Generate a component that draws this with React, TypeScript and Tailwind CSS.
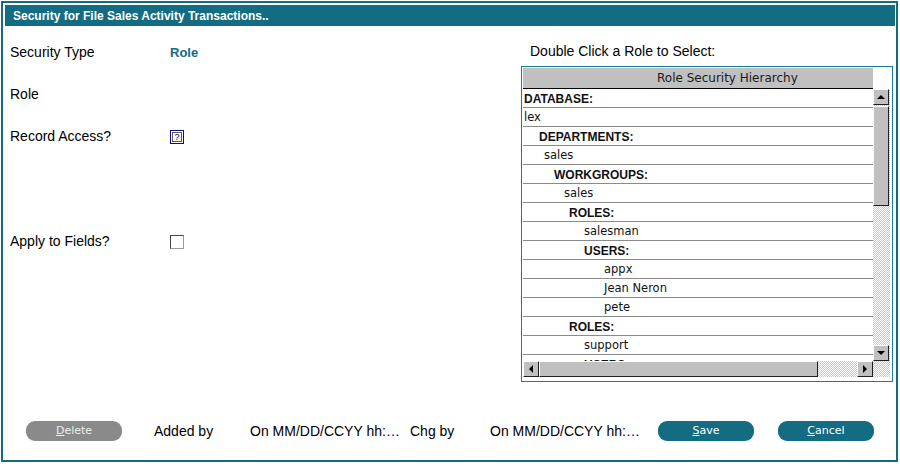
import React from "react";

type Row = { t: string; b?: boolean; pl: string };

const rows: Row[] = [
  { t: "DATABASE:", b: true, pl: "pl-[1px]" },
  { t: "lex", pl: "pl-[1px]" },
  { t: "DEPARTMENTS:", b: true, pl: "pl-[16px]" },
  { t: "sales", pl: "pl-[21px]" },
  { t: "WORKGROUPS:", b: true, pl: "pl-[31px]" },
  { t: "sales", pl: "pl-[41px]" },
  { t: "ROLES:", b: true, pl: "pl-[46px]" },
  { t: "salesman", pl: "pl-[61px]" },
  { t: "USERS:", b: true, pl: "pl-[61px]" },
  { t: "appx", pl: "pl-[81px]" },
  { t: "Jean Neron", pl: "pl-[81px]" },
  { t: "pete", pl: "pl-[81px]" },
  { t: "ROLES:", b: true, pl: "pl-[46px]" },
  { t: "support", pl: "pl-[61px]" },
  { t: "USERS:", b: true, pl: "pl-[61px]" },
];

const checker =
  "bg-[image:repeating-conic-gradient(#c9c9c9_0_25%,#ffffff_0_50%)] bg-[length:2px_2px]";

function Bevel({ className, children }: { className?: string; children?: React.ReactNode }) {
  return (
    <div
      className={
        "bg-[#c0c0c0] border-t border-l border-t-white border-l-white border-b border-r border-b-[#202020] border-r-[#202020] flex items-center justify-center " +
        (className || "")
      }
    >
      {children}
    </div>
  );
}

function Tri({ dir }: { dir: "up" | "down" | "left" | "right" }) {
  const pts =
    dir === "up"
      ? "0,4 4,0 8,4"
      : dir === "down"
      ? "0,0 8,0 4,4"
      : dir === "left"
      ? "4,0 4,8 0,4"
      : "0,0 0,8 4,4";
  const w = dir === "up" || dir === "down" ? 8 : 4;
  const h = dir === "up" || dir === "down" ? 4 : 8;
  return (
    <svg width={w} height={h} viewBox={`0 0 ${w} ${h}`}>
      <polygon points={pts} fill="#000" />
    </svg>
  );
}

export default function App() {
  const sans = "font-['Liberation_Sans',Arial,sans-serif]";
  const dv = "font-['DejaVu_Sans',Verdana,sans-serif]";
  return (
    <div className="w-[900px] h-[466px] bg-white overflow-hidden relative">
      <div className="ml-[1px] mt-[1px] w-[897px] h-[461px] border-2 border-[#136c82] pt-[2px] pl-[2px] pr-[1px] flex flex-col">
        {/* title bar */}
        <div className={`h-[21px] bg-[#136c82] flex items-center pl-[8px] text-white font-bold text-[12px] ${sans}`}>
          Security for File Sales Activity Transactions..
        </div>

        {/* content */}
        <div className="h-[395px] flex">
          {/* left column */}
          <div className={`w-[516px] pl-[5px] pt-[18px] text-[14px] text-black ${sans}`}>
            <div className="h-[42px] flex items-start">
              <div className="w-[160px] leading-[17px]">Security Type</div>
              <div className="leading-[17px] font-bold text-[13px] text-[#136c82]">Role</div>
            </div>
            <div className="h-[42px] flex items-start">
              <div className="w-[160px] leading-[17px]">Role</div>
            </div>
            <div className="h-[105px] flex items-start">
              <div className="w-[160px] leading-[17px]">Record Access?</div>
              <div className="mt-[2px] w-[14px] h-[14px] border border-[#101080] p-[1px]">
                <div className="w-full h-full border border-[#5a5a5a] flex items-center justify-center text-[9px] leading-none text-black bg-white">
                  ?
                </div>
              </div>
            </div>
            <div className="h-[42px] flex items-start">
              <div className="w-[160px] leading-[17px]">Apply to Fields?</div>
              <div className="mt-[2px] w-[14px] h-[14px] border-t border-l border-t-[#444444] border-l-[#444444] border-b border-r border-b-[#9a9a9a] border-r-[#9a9a9a] bg-white" />
            </div>
          </div>

          {/* right column */}
          <div className="flex flex-col pt-[17px]">
            <div className={`pl-[9px] text-[14px] leading-[17px] text-black ${sans}`}>
              Double Click a Role to Select:
            </div>
            <div className="mt-[6px] w-[372px] h-[316px] border border-[#1a7c95] pt-[1px] pl-[1px] pr-[2px] flex flex-col">
              <div className="flex h-[293px]">
                {/* table */}
                <div className="w-[350px] flex flex-col">
                  <div
                    className={`h-[21px] bg-[#c0c0c0] border-b border-black flex items-center pl-[134px] text-[12px] text-[#1a1a1a] whitespace-nowrap ${dv}`}
                  >
                    Role Security Hierarchy
                  </div>
                  <div className="h-[272px] overflow-hidden">
                    {rows.map((r, i) => (
                      <div
                        key={i}
                        className={`h-[19px] pt-[2px] border-b border-[#8a8a8a] flex items-center ${r.pl} ${
                          r.b ? `${sans} font-bold text-[12px] text-[#111]` : `${dv} text-[11.5px] text-[#111]`
                        }`}
                      >
                        {r.t}
                      </div>
                    ))}
                  </div>
                </div>
                {/* vertical scrollbar */}
                <div className="w-[17px] flex flex-col">
                  <div className="h-[21px] bg-white" />
                  <div className={`h-[272px] flex flex-col ${checker}`}>
                    <Bevel className="h-[16px] w-[16px] shrink-0">
                      <Tri dir="up" />
                    </Bevel>
                    <Bevel className="mt-[1px] h-[100px] w-[16px] shrink-0" />
                    <div className="flex-1" />
                    <Bevel className="h-[16px] w-[16px] shrink-0">
                      <Tri dir="down" />
                    </Bevel>
                  </div>
                </div>
              </div>
              {/* horizontal scrollbar */}
              <div className={`flex h-[16px] ${checker}`}>
                <Bevel className="w-[16px] h-[16px] shrink-0">
                  <Tri dir="left" />
                </Bevel>
                <Bevel className="w-[279px] h-[16px] shrink-0" />
                <div className="flex-1" />
                <Bevel className="w-[16px] h-[16px] shrink-0 mr-[17px]">
                  <Tri dir="right" />
                </Bevel>
              </div>
            </div>
          </div>
        </div>

        {/* footer */}
        <div className={`h-[20px] flex items-center pl-[21px] text-[14px] text-black ${sans}`}>
          <button className={`w-[96px] h-[20px] rounded-[9px] bg-[#8a8a8a] text-[#ececec] text-[11px] ${dv}`}>
            <span className="underline">D</span>elete
          </button>
          <div className="ml-[32px] w-[96px]">Added by</div>
          <div className="w-[160px]">On MM/DD/CCYY hh:…</div>
          <div className="w-[80px]">Chg by</div>
          <div className="w-[168px]">On MM/DD/CCYY hh:…</div>
          <button className={`w-[96px] h-[20px] rounded-[9px] bg-[#136c82] text-white text-[11px] ${dv}`}>
            <span className="underline">S</span>ave
          </button>
          <button className={`ml-[24px] w-[96px] h-[20px] rounded-[9px] bg-[#136c82] text-white text-[11px] ${dv}`}>
            <span className="underline">C</span>ancel
          </button>
        </div>
      </div>
    </div>
  );
}
